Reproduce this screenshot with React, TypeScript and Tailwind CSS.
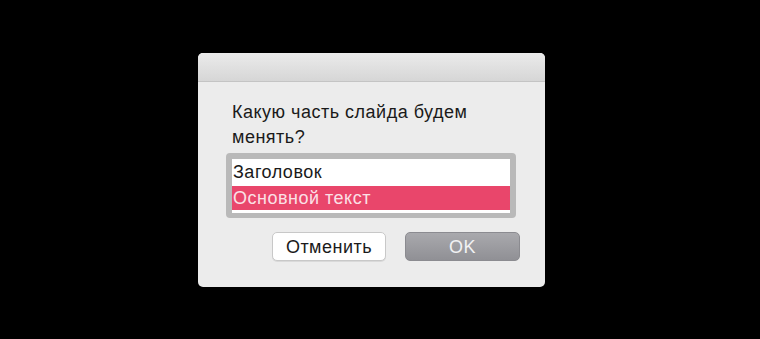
import React from 'react';

const App: React.FC = () => {
  return (
    <div className="w-[760px] h-[339px] bg-black pl-[198px] pt-[53px]" style={{ fontFamily: '"Liberation Sans", Arial, sans-serif' }}>
      <div className="w-[347px] h-[234px] bg-[#ececec] rounded-[5px] overflow-hidden flex flex-col tracking-[0.5px]">
        {/* title bar */}
        <div className="h-[29px] bg-gradient-to-b from-[#ebebeb] to-[#d6d6d6] border-b border-[#c4c4c4]"></div>

        <div className="pl-[34px] pr-[25px] pt-[18px]">
          <p className="text-[18px] leading-[25px] text-[#1a1a1a]">
            Какую часть слайда будем
            <br />
            менять?
          </p>
        </div>

        {/* list box */}
        <div className="ml-[28px] mt-[3px] w-[290px] h-[65px] rounded-[4px] bg-[#b9b9b9] p-[6px] pb-[5px]">
          <div className="h-full bg-white flex flex-col">
            <div className="h-[27px] px-[1px] text-[18px] leading-[27px] text-[#1a1a1a]">Заголовок</div>
            <div className="h-[24px] px-[1px] bg-[#e9466b] text-[18px] leading-[25px] text-[#fbe0e6]">Основной текст</div>
          </div>
        </div>

        {/* buttons */}
        <div className="flex justify-end gap-[19px] pr-[25px] mt-[14px]">
          <button className="w-[114px] h-[29px] rounded-[5px] bg-white border border-[#c8c8c8] shadow-[0_1px_0_rgba(0,0,0,0.08)] text-[18px] leading-none text-[#1a1a1a]">
            Отменить
          </button>
          <button className="w-[115px] h-[29px] rounded-[5px] bg-gradient-to-b from-[#a9a9ad] to-[#909095] border border-[#8b8b90] text-[18px] leading-none text-[#f1f1f3]">
            OK
          </button>
        </div>
      </div>
    </div>
  );
};

export default App;
